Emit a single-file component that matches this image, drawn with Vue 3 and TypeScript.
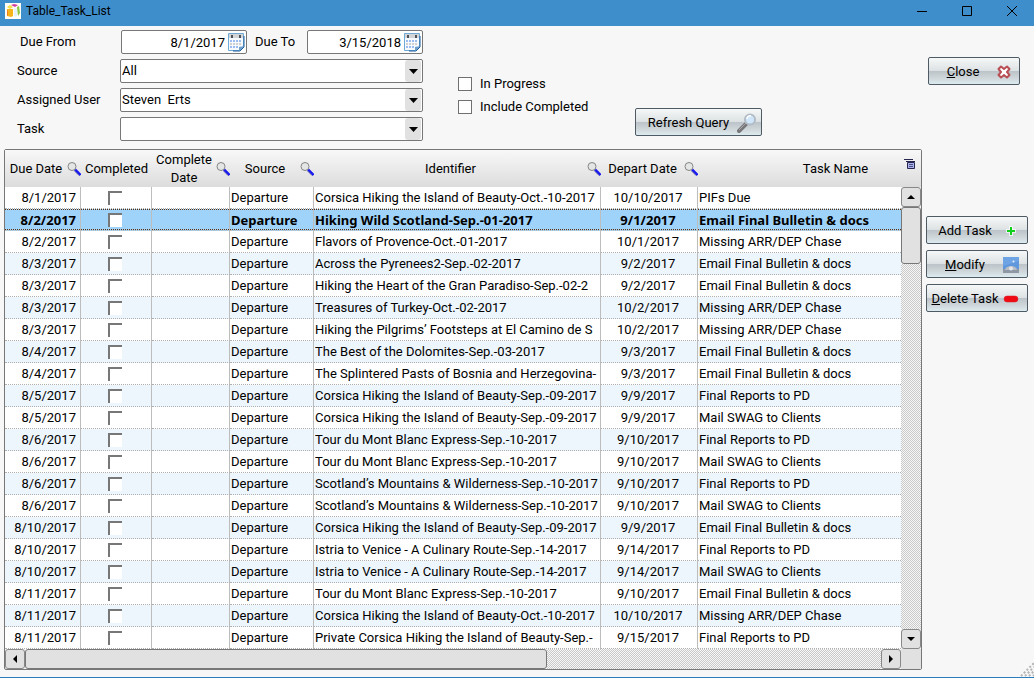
<script setup lang="ts">
import { ref } from 'vue'

interface Task {
  due: string
  identifier: string
  depart: string
  name: string
}

interface Column {
  key: string
  label: string
  searchable: boolean
}

const EMAIL = 'Email Final Bulletin & docs'
const MISSING = 'Missing ARR/DEP Chase'
const REPORTS = 'Final Reports to PD'
const SWAG = 'Mail SWAG to Clients'

const columns: Column[] = [
  { key: 'due', label: 'Due Date', searchable: true },
  { key: 'completed', label: 'Completed', searchable: false },
  { key: 'complete-date', label: 'Complete Date', searchable: true },
  { key: 'source', label: 'Source', searchable: true },
  { key: 'identifier', label: 'Identifier', searchable: true },
  { key: 'depart', label: 'Depart Date', searchable: true },
  { key: 'name', label: 'Task Name', searchable: false },
]

const rows: [string, string, string, string][] = [
  ['8/1/2017', 'Corsica Hiking the Island of Beauty-Oct.-10-2017', '10/10/2017', 'PIFs Due'],
  ['8/2/2017', 'Hiking Wild Scotland-Sep.-01-2017', '9/1/2017', EMAIL],
  ['8/2/2017', 'Flavors of Provence-Oct.-01-2017', '10/1/2017', MISSING],
  ['8/3/2017', 'Across the Pyrenees2-Sep.-02-2017', '9/2/2017', EMAIL],
  ['8/3/2017', 'Hiking the Heart of the Gran Paradiso-Sep.-02-2', '9/2/2017', EMAIL],
  ['8/3/2017', 'Treasures of Turkey-Oct.-02-2017', '10/2/2017', MISSING],
  ['8/3/2017', 'Hiking the Pilgrims’ Footsteps at El Camino de S', '10/2/2017', MISSING],
  ['8/4/2017', 'The Best of the Dolomites-Sep.-03-2017', '9/3/2017', EMAIL],
  ['8/4/2017', 'The Splintered Pasts of Bosnia and Herzegovina-', '9/3/2017', EMAIL],
  ['8/5/2017', 'Corsica Hiking the Island of Beauty-Sep.-09-2017', '9/9/2017', REPORTS],
  ['8/5/2017', 'Corsica Hiking the Island of Beauty-Sep.-09-2017', '9/9/2017', SWAG],
  ['8/6/2017', 'Tour du Mont Blanc Express-Sep.-10-2017', '9/10/2017', REPORTS],
  ['8/6/2017', 'Tour du Mont Blanc Express-Sep.-10-2017', '9/10/2017', SWAG],
  ['8/6/2017', 'Scotland’s Mountains & Wilderness-Sep.-10-2017', '9/10/2017', REPORTS],
  ['8/6/2017', 'Scotland’s Mountains & Wilderness-Sep.-10-2017', '9/10/2017', SWAG],
  ['8/10/2017', 'Corsica Hiking the Island of Beauty-Sep.-09-2017', '9/9/2017', EMAIL],
  ['8/10/2017', 'Istria to Venice - A Culinary Route-Sep.-14-2017', '9/14/2017', REPORTS],
  ['8/10/2017', 'Istria to Venice - A Culinary Route-Sep.-14-2017', '9/14/2017', SWAG],
  ['8/11/2017', 'Tour du Mont Blanc Express-Sep.-10-2017', '9/10/2017', EMAIL],
  ['8/11/2017', 'Corsica Hiking the Island of Beauty-Oct.-10-2017', '10/10/2017', MISSING],
  ['8/11/2017', 'Private Corsica Hiking the Island of Beauty-Sep.-', '9/15/2017', REPORTS],
]

const tasks: Task[] = rows.map(([due, identifier, depart, name]) => ({ due, identifier, depart, name }))

const selected = ref(1)
const dueFrom = ref('8/1/2017')
const dueTo = ref('3/15/2018')

const combos = [
  { id: 'source', label: 'Source', value: 'All' },
  { id: 'user', label: 'Assigned User', value: 'Steven\u00a0 Erts' },
  { id: 'task', label: 'Task', value: '' },
]
</script>

<template>
  <div class="window">
    <header class="titlebar">
      <svg class="app-icon" width="16" height="16" viewBox="0 0 16 16" aria-hidden="true">
        <rect width="16" height="16" fill="#fffdf8" />
        <path d="M2 4l3-2 3 2-3 2z" fill="#f3e04a" />
        <path d="M6 2l3-1 4 1-3 2z" fill="#cf3fa0" />
        <path d="M2 6h6v7l-2 1-4-1z" fill="#f7b41a" />
        <path d="M2 7l1 1v5l-1-1z" fill="#ef7c1a" />
        <path d="M9 6l3-1v8l-3 1z" fill="#e6f2fa" />
        <path d="M12 4l2-1 1 7-2 3z" fill="#8cc63f" />
      </svg>
      <h1>Table_Task_List</h1>
      <div class="window-buttons">
        <button type="button" aria-label="Minimize">
          <svg width="12" height="12" viewBox="0 0 12 12"><path d="M1 6.500h10" stroke="#000" fill="none" /></svg>
        </button>
        <button type="button" aria-label="Maximize">
          <svg width="12" height="12" viewBox="0 0 12 12"><path d="M1.500 1.500h9v9h-9z" stroke="#000" fill="none" /></svg>
        </button>
        <button type="button" aria-label="Close window">
          <svg width="12" height="12" viewBox="0 0 12 12"><path d="M1 1l10 10M11 1L1 11" stroke="#000" fill="none" /></svg>
        </button>
      </div>
    </header>

    <section class="filters">
      <div class="fields">
        <div class="dates">
          <label class="from-label" for="due-from">Due From</label>
          <div class="date-box from-box">
            <input id="due-from" v-model="dueFrom" type="text" />
            <button type="button" aria-label="Pick due from date">
              <svg width="18" height="20" viewBox="0 0 18 20">
                <path d="M1.500 1.500h15v13l-4 4h-11z" fill="#f6fafd" stroke="#6faad6" />
                <path d="M17 4v11l-4 4H6" fill="none" stroke="#1f5c9c" />
                <path d="M2 2h14v4H2z" fill="#d3d5d6" />
                <path d="M4 3h2v3H4zM12 3h2v3h-2z" fill="#4d5358" />
                <path d="M3 9h12" stroke="#9dbcf0" stroke-width="2" stroke-dasharray="2 1" />
                <path d="M3 12h12" stroke="#cfd0d2" stroke-width="2" stroke-dasharray="2 1" />
                <path d="M3 15h9" stroke="#9dbcf0" stroke-width="2" stroke-dasharray="2 1" />
                <path d="M12 19l5-5-5 1z" fill="#6f9fc9" />
              </svg>
            </button>
          </div>
          <label class="to-label" for="due-to">Due To</label>
          <div class="date-box">
            <input id="due-to" v-model="dueTo" type="text" />
            <button type="button" aria-label="Pick due to date">
              <svg width="18" height="20" viewBox="0 0 18 20">
                <path d="M1.500 1.500h15v13l-4 4h-11z" fill="#f6fafd" stroke="#6faad6" />
                <path d="M17 4v11l-4 4H6" fill="none" stroke="#1f5c9c" />
                <path d="M2 2h14v4H2z" fill="#d3d5d6" />
                <path d="M4 3h2v3H4zM12 3h2v3h-2z" fill="#4d5358" />
                <path d="M3 9h12" stroke="#9dbcf0" stroke-width="2" stroke-dasharray="2 1" />
                <path d="M3 12h12" stroke="#cfd0d2" stroke-width="2" stroke-dasharray="2 1" />
                <path d="M3 15h9" stroke="#9dbcf0" stroke-width="2" stroke-dasharray="2 1" />
                <path d="M12 19l5-5-5 1z" fill="#6f9fc9" />
              </svg>
            </button>
          </div>
        </div>
        <div v-for="combo in combos" :key="combo.id" class="combo-row">
          <label :for="combo.id">{{ combo.label }}</label>
          <div class="combo">
            <select :id="combo.id">
              <option>{{ combo.value }}</option>
            </select>
            <span class="combo-arrow" aria-hidden="true">
              <svg width="9" height="5" viewBox="0 0 9 5"><path d="M0 0h9L4.500 5z" fill="#000" /></svg>
            </span>
          </div>
        </div>
      </div>

      <div class="checks">
        <label><input type="checkbox" />In Progress</label>
        <label><input type="checkbox" />Include Completed</label>
      </div>

      <button type="button" class="action refresh">
        <span>Refresh Query</span>
        <svg width="20" height="20" viewBox="0 0 20 20" aria-hidden="true">
          <path d="M2 18l7-7" stroke="#77777a" stroke-width="4" stroke-linecap="round" />
          <path d="M2 17l7-7" stroke="#a9a9ab" stroke-width="1" />
          <circle cx="13" cy="6.500" r="5" fill="#cfe6fb" stroke="#b2bcc6" stroke-width="2" />
          <path d="M10 6a3 3 0 0 1 4-3" stroke="#fff" stroke-width="1.500" fill="none" />
        </svg>
      </button>

      <button type="button" class="action close">
        <span><u>C</u>lose</span>
        <svg width="14" height="14" viewBox="0 0 14 14" aria-hidden="true">
          <path
            d="M4 1.500L7 4l3-2.500L12.500 4 10 7l2.500 3L10 12.500 7 10l-3 2.500L1.500 10 4 7 1.500 4z"
            fill="#fff" stroke="#b84f55" stroke-width="2" stroke-linejoin="round"
          />
        </svg>
      </button>
    </section>

    <main class="content">
      <section class="grid-frame">
        <div class="grid-top">
          <table>
            <thead>
              <tr>
                <th v-for="col in columns" :key="col.key" :class="'col-' + col.key" scope="col">
                  <div class="head">
                    <span>{{ col.label }}</span>
                    <svg v-if="col.searchable" width="14" height="14" viewBox="0 0 14 14" aria-hidden="true">
                      <path d="M8 7.500l5.500 5.500" stroke="#1a1af0" stroke-width="2.500" />
                      <path d="M7.500 9l4.500 4.500" stroke="#6a6a9a" stroke-width="0.800" />
                      <circle cx="5" cy="4.500" r="4" fill="#e3e6e4" stroke="#858585" />
                    </svg>
                  </div>
                </th>
              </tr>
            </thead>
            <tbody>
              <tr
                v-for="(task, i) in tasks"
                :key="i"
                :class="{ selected: i === selected, alt: i % 2 === 1 }"
                @click="selected = i"
              >
                <td class="due">{{ task.due }}</td>
                <td class="done"><input type="checkbox" :aria-label="'Completed: ' + task.name" /></td>
                <td></td>
                <td>Departure</td>
                <td class="identifier"><div>{{ task.identifier }}</div></td>
                <td class="depart">{{ task.depart }}</td>
                <td>{{ task.name }}</td>
              </tr>
            </tbody>
          </table>
          <div class="side-bar">
            <button type="button" class="grid-menu" aria-label="Grid options">
              <svg width="12" height="12" viewBox="0 0 12 12">
                <path d="M0 1.500h9M2 3.500h9" stroke="#26264f" fill="none" />
                <path d="M3.500 4.500h7v6h-7z" fill="#a9b2ec" stroke="#26264f" />
                <path d="M5 6.500h4M5 8.500h4" stroke="#4d4d80" />
              </svg>
            </button>
            <div class="v-scroll">
              <button type="button" class="scroll-btn" aria-label="Scroll up">
                <svg width="8" height="4" viewBox="0 0 8 4"><path d="M0 4h8L4 0z" /></svg>
              </button>
              <div class="v-thumb"></div>
              <div class="track"></div>
              <button type="button" class="scroll-btn" aria-label="Scroll down">
                <svg width="8" height="4" viewBox="0 0 8 4"><path d="M0 0h8L4 4z" /></svg>
              </button>
            </div>
          </div>
        </div>
        <div class="h-scroll">
          <button type="button" class="scroll-btn" aria-label="Scroll left">
            <svg width="4" height="8" viewBox="0 0 4 8"><path d="M4 0v8L0 4z" /></svg>
          </button>
          <div class="h-lane">
            <div class="h-thumb"></div>
            <div class="track"></div>
          </div>
          <button type="button" class="scroll-btn" aria-label="Scroll right">
            <svg width="4" height="8" viewBox="0 0 4 8"><path d="M0 0v8l4-4z" /></svg>
          </button>
          <div class="corner"></div>
        </div>
      </section>

      <aside class="tools">
        <button type="button" class="action">
          <span>Add Task</span>
          <svg width="16" height="16" viewBox="0 0 16 16" aria-hidden="true">
            <path d="M8 3v10M3 8h10" stroke="#fff" stroke-opacity="0.7" stroke-width="4" />
            <path d="M8 4v8M4 8h8" stroke="#12cf1e" stroke-width="2" />
          </svg>
        </button>
        <button type="button" class="action">
          <span><u>M</u>odify</span>
          <svg width="16" height="16" viewBox="0 0 16 16" aria-hidden="true">
            <rect width="16" height="16" fill="#5f97dd" />
            <path d="M0 0h16v4L0 9z" fill="#6fa4e4" />
            <circle cx="10.500" cy="4.500" r="1" fill="#e9f5ff" />
            <path d="M0 16v-4h16v4z" fill="#8e98a4" />
            <path d="M2 13a6 4 0 0 1 12 0z" fill="#b8bdc4" />
            <circle cx="8" cy="11.500" r="2" fill="#e4e7ea" />
          </svg>
        </button>
        <button type="button" class="action">
          <span><u>D</u>elete Task</span>
          <svg width="16" height="16" viewBox="0 0 16 16" aria-hidden="true">
            <rect x="1" y="5" width="14" height="6" rx="3" fill="#f00a14" stroke="#d5202a" stroke-width="0.500" />
          </svg>
        </button>
      </aside>
    </main>

    <footer class="statusbar">
      <svg width="14" height="15" viewBox="0 0 14 15" aria-hidden="true">
        <path d="M1 14L14 1M5 14l9-9M9 14l5-5M13 14l1-1" stroke="#b4b4b4" stroke-width="2" stroke-dasharray="2 2" />
      </svg>
    </footer>
  </div>
</template>

<style>
html,
body {
  background: #f7f7f7;
}
</style>

<style scoped>
.window {
  display: flex;
  flex-direction: column;
  min-height: 100vh;
  box-sizing: border-box;
  border-bottom: 1px solid #2e7cba;
  background: #f7f7f7;
  color: #000;
  font: 13px/16px Roboto, 'Noto Sans', sans-serif;
}

.window *,
.window *::before {
  box-sizing: border-box;
}

button,
input,
select {
  margin: 0;
  font: inherit;
  color: inherit;
}

.titlebar {
  display: flex;
  align-items: center;
  height: 26px;
  padding: 0 16px 5px 5px;
  background: #3f8ecc;
}

h1 {
  flex: 1;
  margin: 0 0 0 5px;
  font-size: 12px;
  font-weight: 400;
}

.window-buttons {
  display: flex;
  gap: 33px;
}

.window-buttons button {
  display: flex;
  padding: 0;
  border: 0;
  background: none;
}

.filters {
  display: flex;
  height: 123px;
  padding: 4px 14px 0 17px;
}

.fields {
  width: 406px;
}

.dates {
  display: flex;
  align-items: center;
  height: 24px;
  margin-bottom: 5px;
}

.from-label {
  width: 104px;
  padding-left: 3px;
}

.to-label {
  width: 60px;
  padding-left: 8px;
}

.date-box {
  display: flex;
  align-items: center;
  flex: 1;
  min-width: 0;
  height: 24px;
  padding-right: 1px;
  border: 1px solid #777;
  border-radius: 2px;
  background: #fff;
}

.from-box {
  flex: none;
  width: 126px;
}

.date-box input {
  flex: 1;
  min-width: 0;
  padding: 1px 2px 0 0;
  border: 0;
  background: none;
  text-align: right;
}

.date-box button {
  display: flex;
  padding: 0;
  border: 0;
  background: none;
}

.combo-row {
  display: flex;
  align-items: center;
  margin-bottom: 5px;
}

.combo-row label {
  width: 103px;
}

.combo {
  display: grid;
  flex: 1;
}

.combo select {
  grid-area: 1 / 1;
  height: 24px;
  padding: 0 20px 0 1px;
  border: 1px solid #777;
  border-radius: 2px;
  appearance: none;
  background: #fff;
}

.combo-arrow {
  display: flex;
  grid-area: 1 / 1;
  justify-self: end;
  align-items: center;
  justify-content: center;
  width: 16px;
  margin: 1px 2px 1px 1px;
  border-radius: 3px;
  background: #e1e1e1;
  pointer-events: none;
}

.checks {
  display: flex;
  flex-direction: column;
  gap: 7px;
  width: 177px;
  margin: 46px 0 0 35px;
}

.checks label {
  display: flex;
  align-items: center;
  gap: 8px;
}

.checks input {
  width: 14px;
  height: 14px;
  border: 1px solid #707070;
  appearance: none;
  background: #fff;
}

.checks input:checked,
.done input:checked {
  background: #3f8ecc;
}

.action {
  display: flex;
  align-items: center;
  height: 28px;
  padding: 1px 4px 0;
  border: 1px solid #4e5b64;
  border-radius: 2px;
  background: linear-gradient(#f6f8f8, #dde2e4 48%, #bcc3c8 50%, #d0d8dc 80%, #dcebef);
  white-space: nowrap;
}

.action span {
  flex: 1;
  text-align: center;
}

.action svg {
  flex: none;
}

.refresh {
  width: 127px;
  margin-top: 78px;
}

.close {
  width: 92px;
  margin: 27px 0 0 auto;
  padding: 1px 8px 0 0;
}

.content {
  display: flex;
  gap: 4px;
  padding: 0 6px 0 4px;
}

.grid-frame {
  flex: 1;
  min-width: 0;
  border: 1px solid #777;
  border-radius: 2px;
}

.grid-top {
  display: flex;
}

table {
  flex: 1;
  min-width: 0;
  width: 100%;
  border-spacing: 0;
  table-layout: fixed;
  background: #fff;
}

th {
  height: 37px;
  padding: 0;
  background: linear-gradient(#f8f8f8, #dcdcdc);
  font-weight: 400;
}

.head {
  display: flex;
  align-items: center;
  line-height: 18px;
}

.head span {
  flex: 1;
  text-align: center;
}

.col-due { width: 76px; }
.col-completed { width: 71px; }
.col-complete-date { width: 78px; }
.col-source { width: 84px; }
.col-identifier { width: 287px; }
.col-depart { width: 97px; }
.col-name .head { padding-left: 72px; }

td {
  height: 22px;
  padding: 1px 1px 0;
  border-right: 1px solid #bdbdbd;
  border-bottom: 1px dotted #b0b0b0;
  white-space: nowrap;
}

td:last-child {
  border-right: 0;
}

.alt td {
  background: #eef6fd;
}

tr.selected td {
  border-bottom-color: #bdbdbd;
  background:
    repeating-linear-gradient(90deg, #5a3010 0 1px, #a0d3f9 1px 2px) top / 100% 1px no-repeat,
    repeating-linear-gradient(90deg, #5a3010 0 1px, #a0d3f9 1px 2px) bottom / 100% 1px no-repeat,
    #a0d3f9;
  font-family: 'Noto Sans', sans-serif;
  font-weight: 700;
}

td.due {
  padding-right: 4px;
  text-align: right;
}

td.depart {
  padding-right: 3px;
  text-align: center;
}

.identifier div {
  overflow: hidden;
}

.done input {
  display: block;
  width: 14px;
  height: 14px;
  margin: 0 0 1px 26px;
  border: 0 solid #777;
  border-width: 2px 0 0 2px;
  appearance: none;
  background: #fff;
}

.side-bar {
  display: flex;
  flex-direction: column;
  width: 20px;
}

.grid-menu {
  height: 37px;
  padding: 0 2px 6px 0;
  border: 0;
  background: linear-gradient(#f8f8f8, #dcdcdc);
}

.v-scroll {
  display: flex;
  flex: 1;
  flex-direction: column;
}

.h-scroll {
  display: flex;
  height: 20px;
}

.h-lane {
  display: flex;
  flex: 1;
}

.scroll-btn {
  display: flex;
  flex: none;
  align-items: center;
  justify-content: center;
  width: 20px;
  height: 20px;
  padding: 0;
  border: 1px solid #888;
  border-radius: 3px;
  background: #e1e1e1;
}

.v-thumb,
.h-thumb {
  border: 1px solid #777;
  border-radius: 3px;
  background: #e1e1e1;
}

.v-thumb {
  height: 57px;
}

.h-thumb {
  width: 61%;
}

.track {
  flex: 1;
  background: repeating-conic-gradient(#c9c9c9 0 25%, #f7f7f7 0 50%) 0 0 / 2px 2px;
}

.corner {
  width: 20px;
  background: #e1e1e1;
}

.tools {
  display: flex;
  flex-direction: column;
  gap: 6px;
  width: 102px;
  padding-top: 67px;
}

.tools .action {
  padding: 1px 8px 0 0;
}

.statusbar {
  display: flex;
  flex: 1;
  align-items: flex-end;
  justify-content: flex-end;
  height: 7px;
  margin-top: -8px;
}
</style>
